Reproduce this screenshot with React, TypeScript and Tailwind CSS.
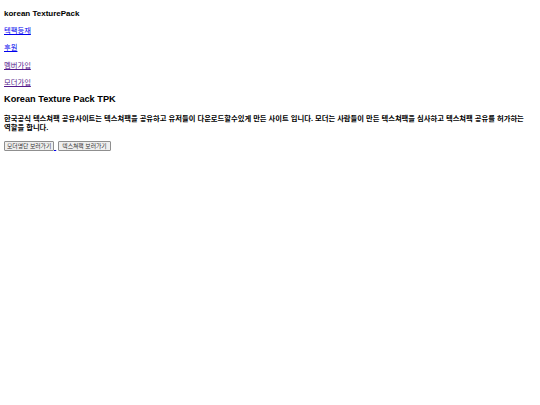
import React from "react";

const font = { fontFamily: '"Liberation Sans", "Noto Sans CJK KR", sans-serif' };

export default function App() {
  return (
    <div className="bg-white w-[540px] h-[405px] overflow-hidden px-[4px] pt-[9px] text-[7.3px] leading-[9px] text-black" style={font}>
      <div className="font-bold h-[9px] text-[8px]">korean TexturePack</div>
      <div className="mt-[8px] h-[9px]"><a href="#" className="text-[#0000ee] underline">텍팩등재</a></div>
      <div className="mt-[8.3px] h-[9px]"><a href="#" className="text-[#0000ee] underline">후원</a></div>
      <div className="mt-[8.3px] h-[9px]"><a href="#" className="text-[#551a8b] underline">멤버가입</a></div>
      <div className="mt-[8.3px] h-[9px]"><a href="#" className="text-[#551a8b] underline">모더가입</a></div>
      <div className="mt-[7.5px] font-bold text-[9.2px] leading-[11px] h-[11px]">Korean Texture Pack TPK</div>
      <div className="mt-[9px] font-bold break-keep">한국공식 텍스쳐팩 공유사이트는 텍스쳐팩을 공유하고 유저들이 다운로드할수있게 만든 사이트 입니다. 모더는 사람들이 만든 텍스쳐팩을 심사하고 텍스쳐팩 공유를 허가하는 역할을 합니다.</div>
      <div className="mt-[8.5px] flex items-end text-[5.8px] leading-[8px]">
        <button className="border border-[#8f8f8f] bg-[#efefef] text-[#333] rounded-[1px] px-[2px] h-[10px] w-[50px] whitespace-nowrap">모더명단 보러가기</button>
        <span className="underline text-[#0000ee] w-[4px] text-[8px] leading-[9px]">&nbsp;</span>
        <button className="border border-[#8f8f8f] bg-[#efefef] text-[#333] rounded-[1px] px-[2px] h-[10px] w-[53px] whitespace-nowrap">텍스쳐팩 보러가기</button>
      </div>
    </div>
  );
}
